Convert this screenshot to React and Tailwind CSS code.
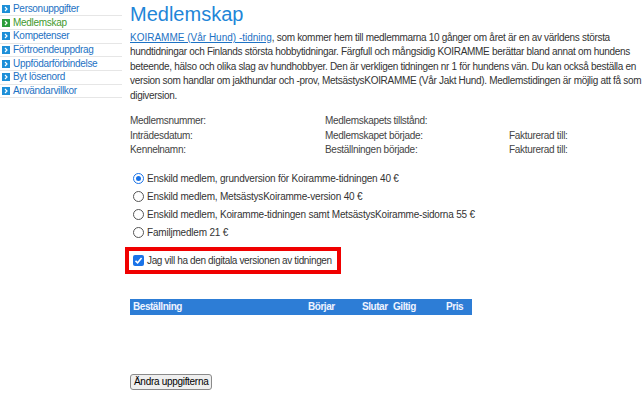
import React from "react";

const menu = [
  { label: "Personuppgifter" },
  { label: "Medlemskap", active: true },
  { label: "Kompetenser" },
  { label: "Förtroendeuppdrag" },
  { label: "Uppfödarförbindelse" },
  { label: "Byt lösenord" },
  { label: "Användarvillkor" },
];

function Chevron({ active }) {
  return (
    <span
      className={
        "flex h-[8px] w-[8px] items-center justify-center " +
        (active ? "bg-[#2a9d3a]" : "bg-[#1d8fd8]")
      }
    >
      <svg width="6" height="6" viewBox="0 0 6 6">
        <path d="M2 1 L4 3 L2 5" stroke="white" strokeWidth="1.2" fill="none" />
      </svg>
    </span>
  );
}

function Radio({ checked }) {
  return (
    <span
      className={
        "flex h-[11px] w-[11px] items-center justify-center rounded-full border " +
        (checked ? "border-[#1a73e8]" : "border-[#555]")
      }
    >
      {checked && <span className="h-[5px] w-[5px] rounded-full bg-[#1a73e8]" />}
    </span>
  );
}

export default function App() {
  const lines = [
    "hundtidningar och Finlands största hobbytidningar. Färgfull och mångsidig KOIRAMME berättar bland annat om hundens",
    "beteende, hälso och olika slag av hundhobbyer. Den är verkligen tidningen nr 1 för hundens vän. Du kan också beställa en",
    "version som handlar om jakthundar och -prov, MetsästysKOIRAMME (Vår Jakt Hund). Medlemstidingen är möjlig att få som",
    "digiversion.",
  ];
  const radios = [
    "Enskild medlem, grundversion för Koiramme-tidningen 40 €",
    "Enskild medlem, MetsästysKoiramme-version 40 €",
    "Enskild medlem, Koiramme-tidningen samt MetsästysKoiramme-sidorna 55 €",
    "Familjmedlem 21 €",
  ];
  return (
    <div
      className="flex h-[398px] w-[643px] overflow-hidden bg-white text-[10px] text-[#333]"
      style={{ fontFamily: '"Liberation Sans", Arial, sans-serif' }}
    >
      <div className="w-[122px] shrink-0 pt-[2.5px] tracking-[-0.3px]">
        {menu.map((m) => (
          <div
            key={m.label}
            className="flex h-[13.7px] items-center gap-[3px] border-b border-[#e6e6e6] pl-[2px]"
          >
            <Chevron active={m.active} />
            <span
              className={
                "leading-none " + (m.active ? "text-[#3f9a2e]" : "text-[#1d72c4]")
              }
            >
              {m.label}
            </span>
          </div>
        ))}
      </div>
      <div className="flex-1 pl-[8px]">
        <h1 className="mt-[3px] text-[20px] leading-[22px] text-[#1f86d8]">Medlemskap</h1>
        <div className="mt-[6px] leading-[14.4px] tracking-[-0.3px]">
          <div className="whitespace-nowrap">
            <span className="tracking-normal text-[#1d72c4] underline">KOIRAMME (Vår Hund) -tidning</span>, som
            kommer hem till medlemmarna 10 gånger om året är en av världens största
          </div>
          {lines.map((l) => (
            <div key={l} className="whitespace-nowrap">
              {l}
            </div>
          ))}
        </div>
        <div className="mt-[11px] grid grid-cols-[195px_184px_1fr] leading-[14.5px] tracking-[-0.3px] text-[#444]">
          <div>Medlemsnummer:</div>
          <div>Medlemskapets tillstånd:</div>
          <div></div>
          <div>Inträdesdatum:</div>
          <div>Medlemskapet började:</div>
          <div>Fakturerad till:</div>
          <div>Kennelnamn:</div>
          <div>Beställningen började:</div>
          <div>Fakturerad till:</div>
        </div>
        <div className="mt-[14px] flex flex-col gap-[4px] pl-[3px] tracking-[-0.2px]">
          {radios.map((r, i) => (
            <div key={r} className="flex h-[14px] items-center gap-[3px]">
              <Radio checked={i === 0} />
              <span>{r}</span>
            </div>
          ))}
        </div>
        <div className="ml-[-5px] mt-[7px] inline-flex h-[27px] items-center gap-[3px] border-[4px] border-[#f00000] pl-[4px] pr-[5px] tracking-[-0.35px]">
          <span className="flex h-[11px] w-[11px] items-center justify-center rounded-[2px] bg-[#1a73e8]">
            <svg width="9" height="9" viewBox="0 0 9 9">
              <path d="M1.5 4.8 L3.6 6.8 L7.6 2" stroke="white" strokeWidth="1.6" fill="none" />
            </svg>
          </span>
          <span>Jag vill ha den digitala versionen av tidningen</span>
        </div>
        <div className="mt-[25px] flex h-[16px] w-[342px] items-center bg-[#2d7dd6] font-bold tracking-[-0.45px] text-[#f0f4ff]">
          <span className="w-[178px] pl-[3px]">Beställning</span>
          <span className="w-[54px]">Börjar</span>
          <span className="w-[31px]">Slutar</span>
          <span className="w-[53px]">Giltig</span>
          <span>Pris</span>
        </div>
        <button className="mt-[59px] block h-[16px] rounded-[3px] border border-[#8a8a8a] bg-[#efefef] px-[3px] leading-none tracking-[-0.3px] text-black">
          Ändra uppgifterna
        </button>
      </div>
    </div>
  );
}
